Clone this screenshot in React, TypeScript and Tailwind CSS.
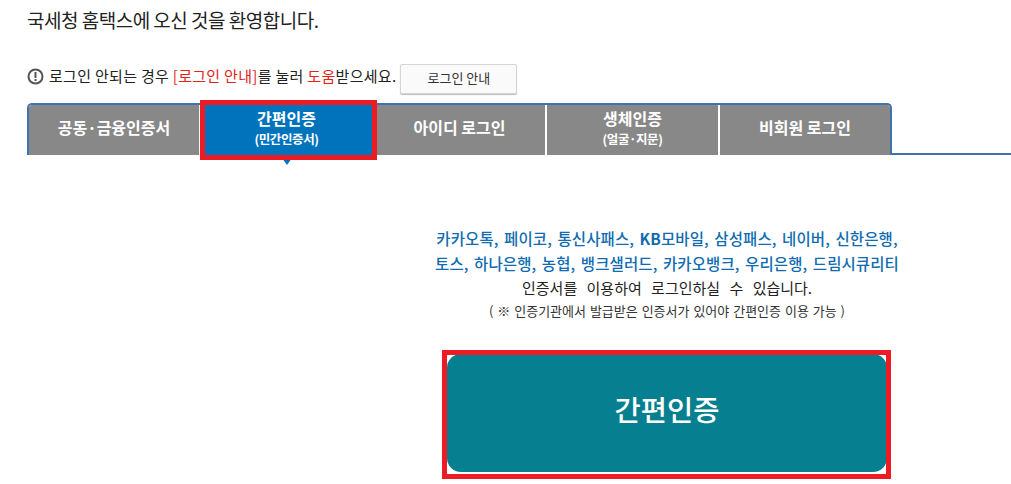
import React from 'react';
import { clsx } from 'clsx';

const tabs = [
  { label: '공동·금융인증서', w: 'w-[170px]' },
  { label: '간편인증', sub: '(민간인증서)', w: 'w-[171px]', active: true },
  { label: '아이디 로그인', w: 'w-[171px]' },
  { label: '생체인증', sub: '(얼굴·지문)', w: 'w-[171px]' },
  { label: '비회원 로그인', w: 'w-[170px]' },
];

export default function App() {
  return (
    <div className="relative w-[1011px] h-[484px] overflow-hidden bg-white text-[#222] font-['Noto_Sans_CJK_KR','Liberation_Sans',sans-serif]">
      <div className="pl-[27px] pt-[7px]">
        <h1 className="text-[19px] leading-[26px] font-normal tracking-[-0.5px]">국세청 홈택스에 오신 것을 환영합니다.</h1>

        <div className="mt-[31px] flex items-center h-[30px]">
          <svg width="17" height="17" viewBox="0 0 17 17" className="shrink-0 mb-[6px]">
            <circle cx="8.5" cy="8.5" r="7" fill="none" stroke="#555" strokeWidth="2" />
            <rect x="7.5" y="4" width="2" height="6" fill="#555" />
            <rect x="7.5" y="11" width="2" height="2" fill="#555" />
          </svg>
          <p className="ml-[5px] pb-[5px] text-[15px] tracking-[0.3px] text-[#222] whitespace-nowrap">
            로그인 안되는 경우 <span className="text-[#e2231a]">[로그인 안내]</span>를 눌러{' '}
            <span className="text-[#e2231a]">도움</span>받으세요.
          </p>
          <button className="ml-[4px] w-[117px] h-[30px] pb-[2px] rounded-[2px] border border-[#d5d5d5] bg-[#fafafa] shadow-[0_1px_1px_#bbb] text-[13px] text-[#333]">
            로그인 안내
          </button>
        </div>

        <div className="mt-[9px] flex items-stretch">
          <div className="flex h-[52px] border-2 border-b-0 border-[#3f72af] rounded-t-[5px] box-border w-[865px] bg-white">
            {tabs.map((t, i) => (
              <div
                key={t.label}
                className={clsx(
                  'relative flex flex-col items-center justify-center h-[50px] pb-[6px] shrink-0 font-bold text-[#fff]',
                  t.w,
                  t.active ? 'bg-[#0073bd]' : 'bg-[#888888]',
                  i < tabs.length - 1 && 'mr-[2px]',
                  i === 0 && 'rounded-tl-[3px]',
                  i === tabs.length - 1 && 'rounded-tr-[3px]'
                )}
              >
                <span className="text-[16px] leading-[23px] whitespace-nowrap">{t.label}</span>
                {t.sub && <span className="text-[12.5px] leading-[18px] tracking-[-0.4px]">{t.sub}</span>}
                {t.active && (
                  <span className="absolute top-full left-1/2 -translate-x-1/2 mt-[3px] w-0 h-0 border-x-[5px] border-x-transparent border-t-[7px] border-t-[#0073bd]" />
                )}
              </div>
            ))}
          </div>
          <div className="flex-1 self-end h-[2px] bg-[#3f72af]" />
        </div>

        <div className="ml-[380px] w-[520px] mt-[71px] flex flex-col items-center text-center">
          <p className="text-[15.5px] leading-[25px] font-medium text-[#0f6cb0] tracking-[0.1px] [word-spacing:2px] whitespace-nowrap">
            카카오톡, 페이코, 통신사패스, <b>KB</b>모바일, 삼성패스, 네이버, 신한은행,
          </p>
          <p className="text-[15.5px] leading-[25px] font-medium text-[#0f6cb0] tracking-[0.1px] [word-spacing:2px] whitespace-nowrap">
            토스, 하나은행, 농협, 뱅크샐러드, 카카오뱅크, 우리은행, 드림시큐리티
          </p>
          <p className="text-[15px] leading-[24px] text-[#222] [word-spacing:6px] whitespace-nowrap">
            인증서를 이용하여 로그인하실 수 있습니다.
          </p>
          <p className="text-[13px] leading-[22px] text-[#333] [word-spacing:1px] whitespace-nowrap">
            ( ※ 인증기관에서 발급받은 인증서가 있어야 간편인증 이용 가능 )
          </p>
          <button className="mt-[32px] w-[440px] h-[118px] pb-[8px] rounded-[14px] bg-[#067f90] text-white text-[28.5px] font-medium">
            간편인증
          </button>
        </div>
      </div>

      <div className="absolute left-[200px] top-[100px] w-[177px] h-[60px] border-[5px] border-[#ed1c24]" />
      <div className="absolute left-[442px] top-[350px] w-[449px] h-[129px] border-[5px] border-[#ed1c24]" />
    </div>
  );
}
